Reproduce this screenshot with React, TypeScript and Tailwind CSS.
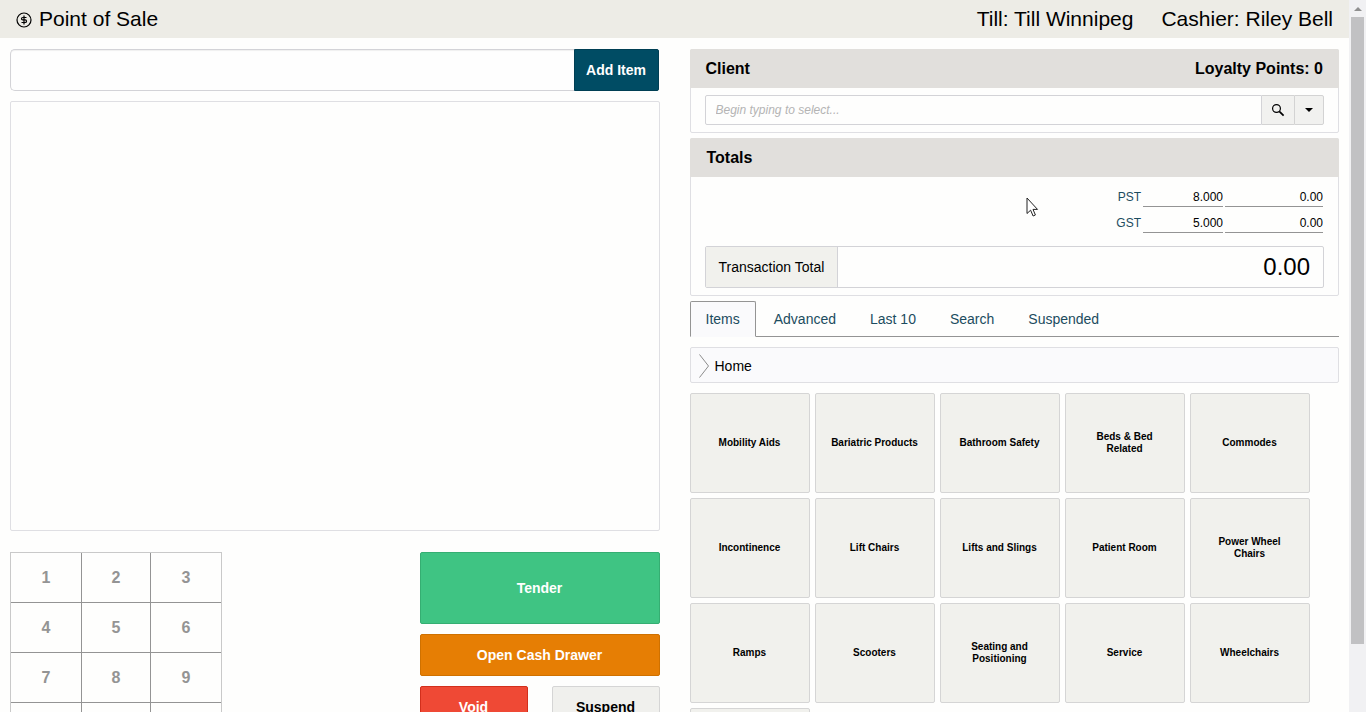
import { useState } from 'react'

const CATEGORIES = [
  'Mobility Aids', 'Bariatric Products', 'Bathroom Safety', 'Beds & Bed Related', 'Commodes',
  'Incontinence', 'Lift Chairs', 'Lifts and Slings', 'Patient Room', 'Power Wheel Chairs',
  'Ramps', 'Scooters', 'Seating and Positioning', 'Service', 'Wheelchairs',
  '',
]

const TABS = ['Items', 'Advanced', 'Last 10', 'Search', 'Suspended']

const TAXES = [
  { name: 'PST', rate: '8.000', amount: '0.00' },
  { name: 'GST', rate: '5.000', amount: '0.00' },
]

const KEYS = ['1', '2', '3', '4', '5', '6', '7', '8', '9', '', '', '']

function DollarIcon() {
  return (
    <svg width="16" height="16" viewBox="0 0 16 16" fill="none" stroke="currentColor" aria-hidden="true">
      <circle cx="8" cy="8" r="7" strokeWidth="1.2" />
      <path d="M10.500 5.500H6.800c-1 0-1.300.4-1.300 1.200s.4 1.200 1.300 1.200h2.400c1 0 1.300.5 1.300 1.300s-.4 1.300-1.300 1.300H5.500M8 3.500v9" strokeWidth="1.200" />
    </svg>
  )
}

function SearchIcon() {
  return (
    <svg width="14" height="14" viewBox="0 0 14 14" fill="none" stroke="currentColor" aria-hidden="true">
      <circle cx="5.500" cy="5.500" r="3.900" strokeWidth="1.200" />
      <path d="M8.300 8.300l4.300 4.300" strokeWidth="1.700" />
    </svg>
  )
}

function Header() {
  return (
    <header className="flex h-[38px] items-center justify-between bg-[#edece6] px-4 text-[21px] leading-6">
      <h1 className="flex items-center gap-[7px]">
        <span className="pt-0.5"><DollarIcon /></span>
        Point of Sale
      </h1>
      <div className="flex gap-7">
        <span>Till: Till Winnipeg</span>
        <span>Cashier: Riley Bell</span>
      </div>
    </header>
  )
}

function Keypad() {
  return (
    <div className="grid grid-cols-[repeat(3,70px)] self-start border border-[#c9c9c9]">
      {KEYS.map((key, i) => (
        <button
          key={i}
          type="button"
          aria-label={key || 'Blank key'}
          className={`h-[50px] border-b border-b-[#949494] text-base font-bold text-[#949494] ${i % 3 === 1 ? 'border-x border-x-[#949494]' : ''}`}
        >
          {key}
        </button>
      ))}
    </div>
  )
}

function Sale() {
  return (
    <section className="min-w-0">
      <form className="mr-px flex h-[42px]" onSubmit={e => e.preventDefault()}>
        <input
          aria-label="Item"
          className="min-w-0 flex-1 rounded-l-[5px] border border-r-0 border-[#d3d3d7] bg-[#fefefe] px-3 text-sm shadow-[inset_0_1px_1px_rgba(0,0,0,0.06)] outline-none"
        />
        <button type="submit" className="w-[85px] rounded-r-xs border border-[#003f54] bg-[#004c64] text-sm font-bold text-white">
          Add Item
        </button>
      </form>

      <div className="mt-2.5 h-[430px] rounded-xs border border-[#dfdfe3]" />

      <div className="mt-[21px] flex justify-between">
        <Keypad />
        <div className="grid w-60 grid-cols-2 gap-x-6 gap-y-2.5 self-start text-sm font-bold">
          <button type="button" className="col-span-2 h-[72px] rounded-xs border border-[#35ae72] bg-[#3fc483] text-white">Tender</button>
          <button type="button" className="col-span-2 h-[42px] rounded-xs border border-[#cf7100] bg-[#e67e04] text-white">Open Cash Drawer</button>
          <button type="button" className="h-[42px] rounded-xs border border-[#d22f1c] bg-[#ef4935] text-white">Void</button>
          <button type="button" className="h-[42px] rounded-xs border border-[#d5d5d5] bg-[#f0f0ed] text-black">Suspend</button>
        </div>
      </div>
    </section>
  )
}

function ClientPanel() {
  return (
    <div className="rounded-xs border border-[#dfdfe3]">
      <div className="-mx-px -mt-px flex h-[39px] items-center justify-between rounded-t-xs bg-[#e1dfdc] px-4 text-base font-bold">
        <h2>Client</h2>
        <span>Loyalty Points: 0</span>
      </div>
      <div className="flex px-3.5 py-[7px]">
        <input
          aria-label="Client"
          placeholder="Begin typing to select..."
          className="h-[30px] min-w-0 flex-1 rounded-l-xs border border-[#d3d3d7] px-2.5 text-xs outline-none placeholder:text-[#b4b4b4] placeholder:italic"
        />
        <button type="button" aria-label="Search clients" className="flex w-8 items-center justify-center border-y border-[#d3d3d3] bg-[#f1f1ef]">
          <SearchIcon />
        </button>
        <button type="button" aria-label="Show clients" className="flex w-[30px] items-center justify-center rounded-r-xs border border-[#d3d3d3] bg-[#f1f1ef]">
          <svg width="8" height="4" viewBox="0 0 8 4" aria-hidden="true"><path d="M0 0h8L4 4z" /></svg>
        </button>
      </div>
    </div>
  )
}

function TotalsPanel() {
  return (
    <div className="relative mt-[5px] rounded-xs border border-[#dfdfe3]">
      <h2 className="-mx-px -mt-px flex h-[39px] items-center rounded-t-xs bg-[#e1dfdc] px-[17px] text-base font-bold">Totals</h2>
      <div className="px-3.5 pt-2.5 pb-[7px]">
        <div className="flex flex-col gap-1.5 pr-px text-xs">
          {TAXES.map(tax => (
            <div key={tax.name} className="flex h-5 justify-end gap-0.5">
              <label htmlFor={tax.name} className="leading-5 text-[#1c4c60]">{tax.name}</label>
              <input id={tax.name} defaultValue={tax.rate} className="w-20 border-b border-[#949494] text-right outline-none" />
              <input aria-label={`${tax.name} amount`} defaultValue={tax.amount} className="w-[98px] border-b border-[#949494] text-right outline-none" />
            </div>
          ))}
        </div>
        <div className="mt-[13px] flex h-[42px] rounded-xs border border-[#d3d3d7]">
          <label htmlFor="total" className="flex items-center border-r border-[#d3d3d7] bg-[#f1f1ed] px-[13px] text-sm whitespace-nowrap">
            Transaction Total
          </label>
          <input id="total" readOnly value="0.00" className="min-w-0 flex-1 px-[13px] text-right text-2xl outline-none" />
        </div>
      </div>
      {/* Mouse pointer */}
      <svg className="absolute top-[58px] left-[335px]" width="14" height="21" viewBox="0 0 14 21" aria-hidden="true">
        <path d="M1 1v15.500l3.600-3.300 2.500 5.800 2.300-1-2.400-5.600h4.500z" fill="#fff" stroke="#222" strokeWidth="1" />
      </svg>
    </div>
  )
}

function Catalog() {
  const [active, setActive] = useState('Items')

  return (
    <>
      <div role="tablist" className="mt-[5px] flex h-9 gap-0.5 border-b border-[#949494] text-sm">
        {TABS.map(tab => (
          <button
            key={tab}
            type="button"
            role="tab"
            aria-selected={tab === active}
            onClick={() => setActive(tab)}
            className={`-mb-px rounded-t-xs border px-[15px] text-[#1c4c60] ${tab === active ? 'border-[#949494] border-b-[#fafafc] bg-[#fafafc]' : 'border-transparent'}`}
          >
            {tab}
          </button>
        ))}
      </div>

      <nav className="mt-2.5 flex h-9 items-center gap-1.5 rounded-xs border border-[#dfdfe3] bg-[#fafafc] pt-0.5 pl-2 text-sm">
        <svg width="10" height="24" viewBox="0 0 10 24" fill="none" stroke="#8c8c8c" aria-hidden="true">
          <path d="M.5.5l9 11.500-9 11.500" />
        </svg>
        <a href="#home">Home</a>
      </nav>

      <div className="mt-2.5 flex flex-wrap gap-[5px]">
        {CATEGORIES.map(name => (
          <button
            key={name}
            type="button"
            aria-label={name || 'More'}
            className="h-[100px] w-[120px] rounded-xs border border-[#d5d5d5] bg-[#f1f1ed] px-3.5 text-[10px] leading-3 font-bold"
          >
            {name}
          </button>
        ))}
      </div>
    </>
  )
}

function Scrollbar() {
  return (
    <div className="flex w-[17px] flex-col items-center bg-[#f1f1f3]" aria-hidden="true">
      <div className="flex h-[17px] items-center">
        <svg width="8" height="4" viewBox="0 0 8 4"><path d="M4 0l4 4H0z" fill="#8f8f8f" /></svg>
      </div>
      <div className="h-[88%] w-[13px] bg-[#c1c1c3]" />
    </div>
  )
}

export default function App() {
  return (
    <div className="flex h-screen overflow-hidden bg-[#fefefd] font-['Liberation_Sans',Arial,sans-serif] text-black">
      <div className="min-w-0 flex-1 overflow-hidden">
        <Header />
        <main className="grid grid-cols-2 gap-[30px] px-2.5 pt-[11px]">
          <Sale />
          <section className="min-w-0">
            <ClientPanel />
            <TotalsPanel />
            <Catalog />
          </section>
        </main>
      </div>
      <Scrollbar />
    </div>
  )
}
